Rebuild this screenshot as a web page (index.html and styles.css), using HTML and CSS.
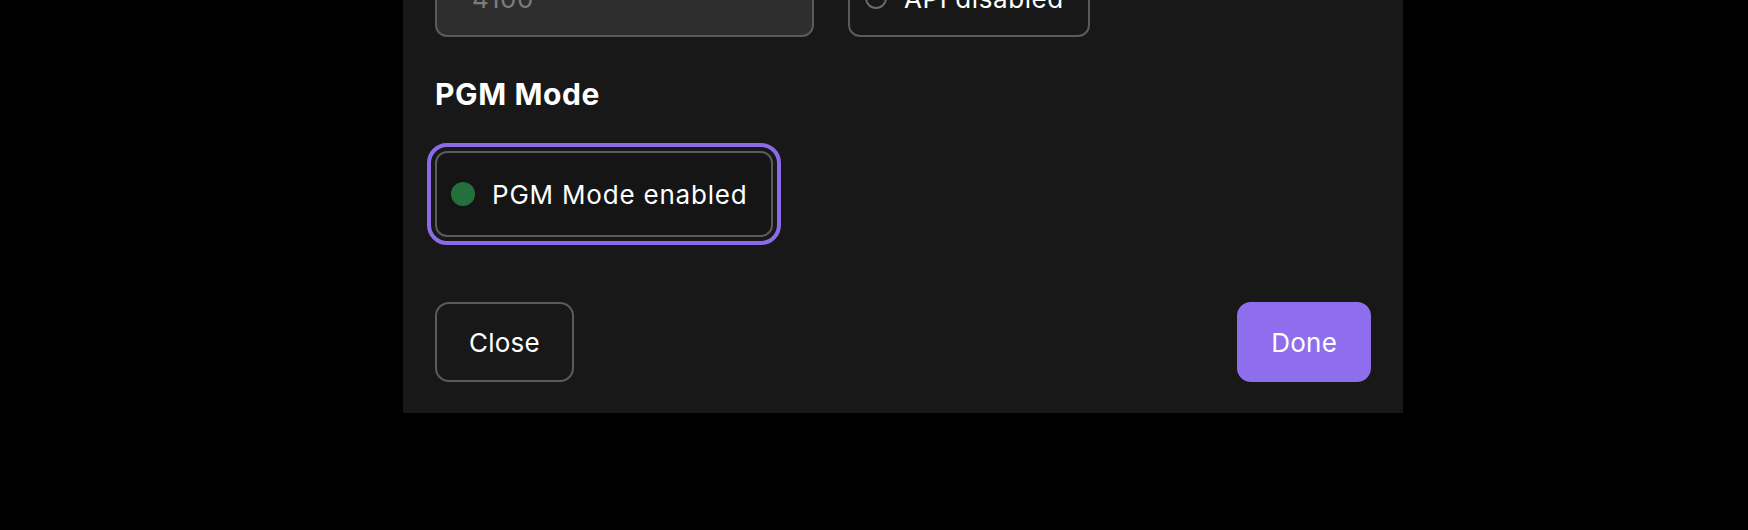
FILE: index.html
```html
<!DOCTYPE html>
<html lang="en">
<head>
<meta charset="utf-8">
<title>PGM Mode</title>
<link rel="stylesheet" href="styles.css">
</head>
<body>
<div class="panel">
  <div class="row">
    <div class="input">4100</div>
    <label class="radio-box"><span class="radio"></span><span>API disabled</span></label>
  </div>
  <h2 class="section-title">PGM Mode</h2>
  <div class="toggle-row">
    <button class="toggle"><span class="dot"></span><span>PGM Mode enabled</span></button>
  </div>
  <div class="actions">
    <button class="btn">Close</button>
    <button class="btn primary">Done</button>
  </div>
</div>
</body>
</html>
```

FILE: styles.css
```css
* { box-sizing: border-box; }
html, body { margin: 0; padding: 0; }
body {
  background: #000;
  height: 530px;
  overflow: hidden;
  font-family: Inter, "Liberation Sans", sans-serif;
  color: #fff;
}
.panel {
  width: 1000px;
  margin: -41px 0 0 403px;
  background: #181818;
  padding: 0 32px 31px 32px;
}
.row {
  display: flex;
  gap: 34px;
}
.input {
  width: 379px;
  height: 78px;
  background: #2e2e2e;
  border: 2px solid #5b5b5b;
  border-radius: 12px;
  display: flex;
  align-items: center;
  padding-left: 35px;
  font-size: 26px;
  letter-spacing: 0.6px;
  color: #7c7c7c;
}
.radio-box {
  width: 242px;
  height: 78px;
  border: 2px solid #5b5b5b;
  border-radius: 12px;
  display: flex;
  align-items: center;
  gap: 17px;
  padding-left: 15px;
  font-size: 26px;
  letter-spacing: 0.6px;
  color: #fff;
}
.radio {
  width: 22px;
  height: 22px;
  border-radius: 50%;
  border: 2px solid #6a6a6a;
}
.section-title {
  margin: 39px 0 0 0;
  font-size: 30px;
  line-height: 36px;
  font-weight: 700;
  letter-spacing: 0.6px;
}
.toggle-row {
  margin-top: 39px;
  display: flex;
}
.toggle {
  height: 86px;
  display: flex;
  align-items: center;
  gap: 17px;
  padding: 0 24px 0 14px;
  background: #151515;
  border: 2px solid #5b5b5b;
  border-radius: 12px;
  outline: 4px solid #8c6be9;
  outline-offset: 4px;
  font-family: inherit;
  font-size: 26px;
  letter-spacing: 0.8px;
  color: #fff;
}
.dot {
  width: 24px;
  height: 24px;
  border-radius: 50%;
  background: #24703c;
}
.actions {
  margin-top: 65px;
  display: flex;
  justify-content: space-between;
}
.btn {
  height: 80px;
  padding: 0 32px;
  border: 2px solid #5b5b5b;
  border-radius: 14px;
  background: #181818;
  color: #fff;
  font-family: inherit;
  font-size: 26px;
  letter-spacing: 0.2px;
}
.btn.primary {
  background: #8e6eec;
  border-color: #8e6eec;
}
```
